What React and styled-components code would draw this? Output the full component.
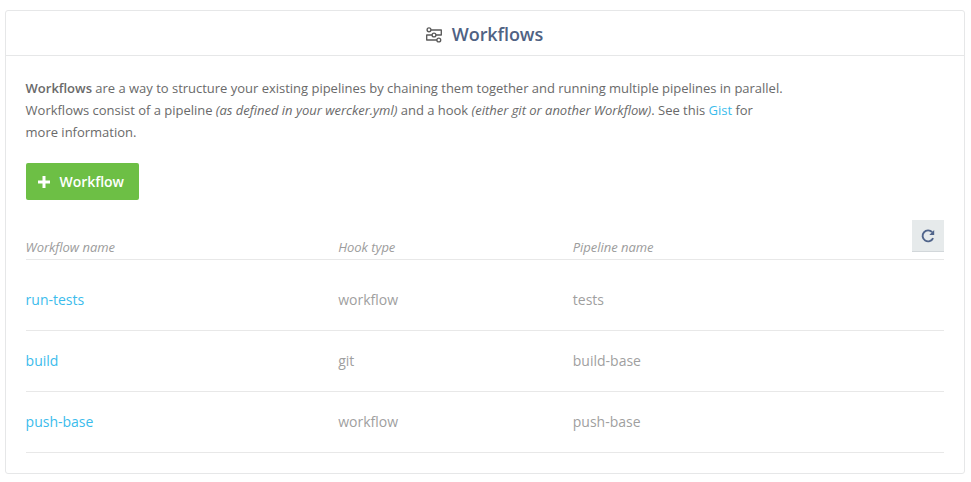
import React from 'react';
import styled, { createGlobalStyle } from 'styled-components';

const GlobalStyle = createGlobalStyle`
  * { box-sizing: border-box; }
  body { margin: 0; background: #fff; font-family: "Open Sans", sans-serif; -webkit-font-smoothing: antialiased; }
`;
const Panel = styled.section`
  margin: 10px 6px 0 5px;
  height: 464px;
  border: 1px solid #e6e7e8;
  border-radius: 3px;
`;
const Header = styled.header`
  height: 45px;
  display: flex;
  align-items: center;
  justify-content: center;
  gap: 10px;
  padding-top: 2px;
  padding-right: 1px;
  border-bottom: 1px solid #e6e7e8;
`;
const Title = styled.h1`
  margin: 0;
  font-size: 18px;
  line-height: 24px;
  font-weight: 600;
  letter-spacing: -0.08px;
  color: #4f6283;
`;
const HeaderIcon = styled.svg`
  width: 16px;
  height: 16px;
  margin-top: 2px;
`;
const Body = styled.div`
  padding: 21px 20px 0 19.6px;
`;
const Intro = styled.p`
  margin: 0;
  width: 762px;
  font-size: 13px;
  line-height: 22px;
  letter-spacing: -0.014px;
  color: #6a6a6a;
`;
const Strong = styled.b`
  font-weight: 600;
`;
const Link = styled.a`
  color: #3bbcec;
  text-decoration: none;
`;
const AddButton = styled.button`
  display: flex;
  align-items: center;
  gap: 9.5px;
  margin: 20px 0 0 0.4px;
  width: 113px;
  height: 37px;
  padding: 0 0 0 12px;
  border: 0;
  border-radius: 2px;
  background: #6dbf45;
  color: #fff;
  font: 600 14px "Open Sans", sans-serif;
  letter-spacing: -0.05px;
`;
const columns = '312.6px 234.6px 1fr';
const TableHead = styled.div`
  display: grid;
  grid-template-columns: ${columns} 32px;
  align-items: start;
  margin-top: 20px;
  height: 40px;
  border-bottom: 1px solid #e8e8e8;
`;
const HeadCell = styled.span`
  padding-top: 18px;
  font-size: 13px;
  line-height: 18px;
  font-style: italic;
  letter-spacing: -0.04px;
  color: #9c9c9c;
`;
const RefreshButton = styled.button`
  width: 32px;
  height: 32px;
  padding: 0;
  border: 0;
  border-bottom: 1px solid #d2d7da;
  background: #e6eaeb;
  display: grid;
  place-items: center;
`;
const Row = styled.div`
  display: grid;
  grid-template-columns: ${columns};
  align-items: center;
  height: ${(p) => (p.$first ? 71 : 61)}px;
  padding-top: ${(p) => (p.$first ? 10 : 0)}px;
  border-bottom: 1px solid #e8e8e8;
  font-size: 14px;
  line-height: 20px;
  color: #9f9f9f;
`;

const rows = [
  ['run-tests', 'workflow', 'tests'],
  ['build', 'git', 'build-base'],
  ['push-base', 'workflow', 'push-base'],
];

const WorkflowIcon = () => (
  <HeaderIcon viewBox="0 0 16 16" fill="none" stroke="#5a5a5a" strokeWidth="1.35">
    <circle cx="3" cy="2.8" r="1.9" />
    <circle cx="8" cy="8" r="1.9" />
    <circle cx="12.8" cy="13" r="1.9" />
    <path d="M5 3h10.3v5H10M6 8H.7v5H11" strokeLinejoin="round" />
  </HeaderIcon>
);

const RefreshIcon = () => (
  <svg width="14" height="14" viewBox="0 0 14 14">
    <path d="M12.1 9.1A5.5 5.5 0 1 1 11.2 3.2" fill="none" stroke="#50648a" strokeWidth="1.9" />
    <path d="M13.2 1v4.9H8.3z" fill="#50648a" />
  </svg>
);

export default function App() {
  return (
    <>
      <GlobalStyle />
      <Panel>
        <Header><WorkflowIcon /><Title>Workflows</Title></Header>
        <Body>
          <Intro>
            <Strong>Workflows</Strong> are a way to structure your existing pipelines by chaining them together and running multiple pipelines in parallel. Workflows consist of a pipeline <i>(as defined in your wercker.yml)</i> and a hook <i>(either git or another Workflow)</i>. See this <Link>Gist</Link> for more information.
          </Intro>
          <AddButton>
            <svg width="12" height="12" viewBox="0 0 12 12"><path d="M6 0v12M0 6h12" stroke="#fff" strokeWidth="3" /></svg>
            Workflow
          </AddButton>
          <TableHead>
            <HeadCell>Workflow name</HeadCell><HeadCell>Hook type</HeadCell><HeadCell>Pipeline name</HeadCell>
            <RefreshButton aria-label="Refresh"><RefreshIcon /></RefreshButton>
          </TableHead>
          {rows.map(([name, hook, pipeline], i) => (
            <Row key={name} $first={i === 0}><Link>{name}</Link><span>{hook}</span><span>{pipeline}</span></Row>
          ))}
        </Body>
      </Panel>
    </>
  );
}
